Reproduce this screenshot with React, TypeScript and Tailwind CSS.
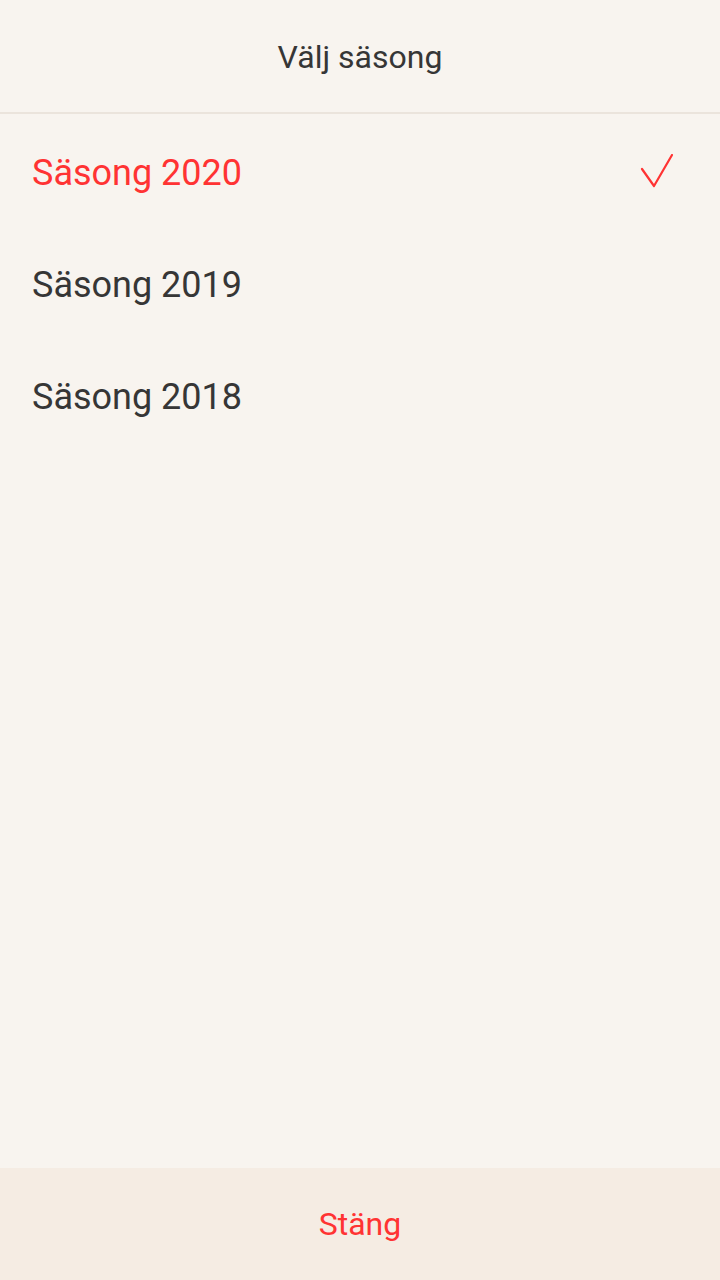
export default function App() {
  const seasons = [
    { label: "Säsong 2020", selected: true },
    { label: "Säsong 2019", selected: false },
    { label: "Säsong 2018", selected: false },
  ];

  return (
    <div className="flex flex-col h-[1280px] w-[720px] bg-[#f8f4ef] font-['Roboto',sans-serif]">
      <header className="flex items-center justify-center h-[114px] border-b-2 border-[#ebe4dc] shrink-0">
        <h1 className="text-[32px] text-[#363636] pt-[2px]">Välj säsong</h1>
      </header>

      <ul className="flex-1">
        {seasons.map((s) => (
          <li
            key={s.label}
            className="flex items-center justify-between h-[112px] pl-8 pr-11 pt-[6px]"
          >
            <span
              className={
                s.selected
                  ? "text-[36px] text-[#ff3333]"
                  : "text-[36px] text-[#363636]"
              }
            >
              {s.label}
            </span>
            {s.selected && (
              <svg width="36" height="36" viewBox="0 0 36 36" fill="none" className="-mt-[2px]">
                <path
                  d="M2 15L14 32L32 1"
                  stroke="#ff3333"
                  strokeWidth={2.2}
                  strokeLinecap="round"
                  strokeLinejoin="round"
                />
              </svg>
            )}
          </li>
        ))}
      </ul>

      <button className="flex items-center justify-center h-[112px] shrink-0 bg-[#f5ece3] text-[32px] text-[#ff3333]">
        Stäng
      </button>
    </div>
  );
}
